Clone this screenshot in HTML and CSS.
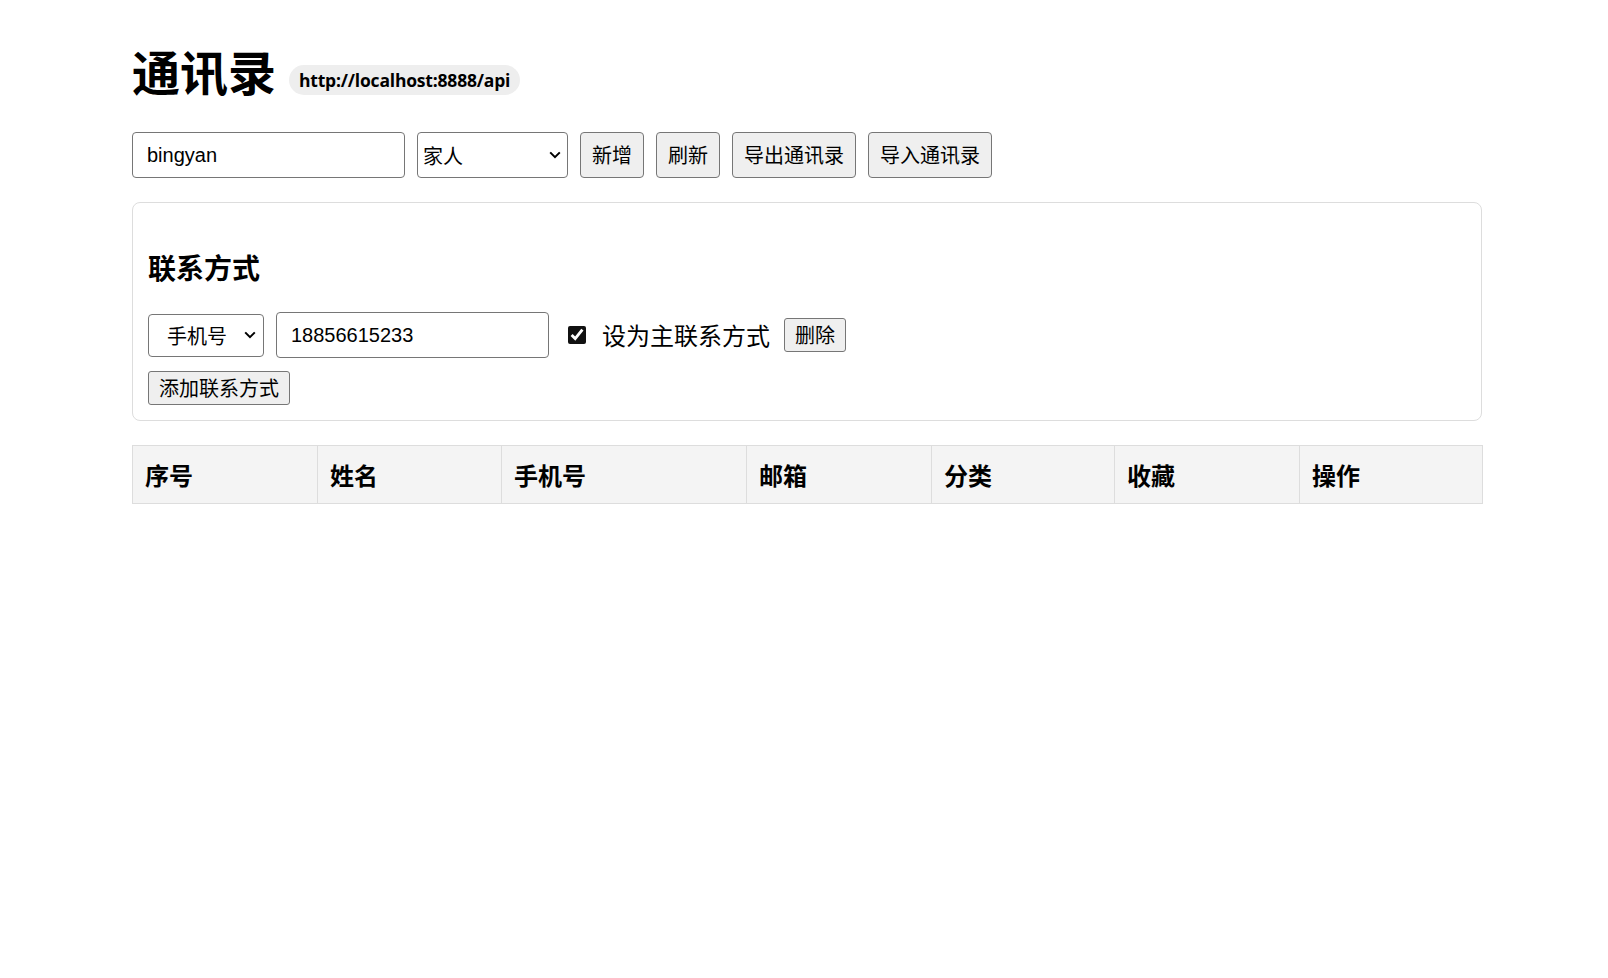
FILE: index.html
```html
<!DOCTYPE html>
<html lang="zh-CN">
<head>
<meta charset="utf-8">
<title>通讯录</title>
<link rel="stylesheet" href="styles.css">
</head>
<body>
<div class="page">
  <div class="title-row">
    <h1 class="title">通讯录</h1>
    <span class="badge">http://localhost:8888/api</span>
  </div>

  <div class="toolbar">
    <input class="name-input" type="text" value="bingyan">
    <select class="group-select">
      <option>家人</option>
      <option>朋友</option>
      <option>同事</option>
    </select>
    <button class="tool-btn">新增</button>
    <button class="tool-btn">刷新</button>
    <button class="tool-btn">导出通讯录</button>
    <button class="tool-btn">导入通讯录</button>
  </div>

  <section class="card">
    <h3 class="card-title">联系方式</h3>
    <div class="contact-row">
      <select class="type-select">
        <option>手机号</option>
        <option>邮箱</option>
      </select>
      <input class="value-input" type="text" value="18856615233">
      <input class="primary-check" type="checkbox" checked>
      <span class="primary-label">设为主联系方式</span>
      <button class="small-btn">删除</button>
    </div>
    <button class="small-btn add-btn">添加联系方式</button>
  </section>

  <table class="contacts">
    <colgroup>
      <col class="c-idx">
      <col class="c-name">
      <col class="c-phone">
      <col class="c-mail">
      <col class="c-cat">
      <col class="c-fav">
      <col class="c-op">
    </colgroup>
    <thead>
      <tr>
        <th>序号</th>
        <th>姓名</th>
        <th>手机号</th>
        <th>邮箱</th>
        <th>分类</th>
        <th>收藏</th>
        <th>操作</th>
      </tr>
    </thead>
    <tbody></tbody>
  </table>
</div>
</body>
</html>
```

FILE: styles.css
```css
html, body {
  margin: 0;
  padding: 0;
  background: #fff;
  color: #000;
}

body {
  font-family: "Liberation Sans", "Noto Sans CJK SC", sans-serif;
}

.page {
  width: 1350px;
  margin: 0 0 0 132px;
  padding-top: 38px;
}

.title-row {
  display: flex;
  align-items: center;
  height: 64px;
}

.title {
  margin: 0;
  font-family: "Noto Sans CJK SC", sans-serif;
  font-size: 48px;
  font-weight: 700;
  line-height: 64px;
}

.badge {
  margin-left: 13px;
  margin-top: 20px;
  height: 30px;
  line-height: 30px;
  padding: 0 10px;
  border-radius: 15px;
  background: #eeeeee;
  font-family: "Open Sans", "Noto Sans", sans-serif;
  font-size: 17.5px;
  font-weight: 700;
  letter-spacing: -0.2px;
}

.toolbar {
  display: flex;
  align-items: center;
  gap: 12px;
  margin-top: 30px;
}

.name-input,
.value-input {
  box-sizing: border-box;
  width: 273px;
  height: 46px;
  padding: 0 14px;
  border: 1px solid #767676;
  border-radius: 4px;
  font-family: "Liberation Sans", "Noto Sans CJK SC", sans-serif;
  font-size: 20px;
  color: #000;
  background: #fff;
  outline: none;
}

.group-select,
.type-select {
  box-sizing: border-box;
  appearance: none;
  -webkit-appearance: none;
  border: 1px solid #767676;
  border-radius: 4px;
  background-color: #fff;
  background-image: url("data:image/svg+xml,%3Csvg xmlns='http://www.w3.org/2000/svg' width='12' height='8' viewBox='0 0 12 8'%3E%3Cpath d='M1.2 1.4 L6 6.2 L10.8 1.4' fill='none' stroke='%23000' stroke-width='2'/%3E%3C/svg%3E");
  background-repeat: no-repeat;
  font-family: "Noto Sans CJK SC", sans-serif;
  font-size: 20px;
  color: #000;
  outline: none;
}

.group-select {
  width: 151px;
  height: 46px;
  padding: 0 0 0 5px;
  background-position: right 6px center;
}

.tool-btn,
.small-btn {
  box-sizing: border-box;
  border: 1px solid #767676;
  border-radius: 4px;
  background: #efefef;
  color: #000;
  font-family: "Noto Sans CJK SC", sans-serif;
  font-size: 20px;
  line-height: 1;
  cursor: pointer;
}

.tool-btn {
  height: 46px;
  padding: 0 11px;
}

.card {
  margin-top: 24px;
  border: 1px solid #dddddd;
  border-radius: 8px;
  padding: 44px 15px 15px;
}

.card-title {
  margin: 0;
  font-family: "Noto Sans CJK SC", sans-serif;
  font-size: 28px;
  font-weight: 700;
  line-height: 40px;
}

.contact-row {
  display: flex;
  align-items: center;
  margin-top: 25px;
}

.type-select {
  width: 116px;
  height: 43px;
  padding: 0 0 0 18px;
  background-position: right 7px center;
}

.value-input {
  margin-left: 12px;
}

.primary-check {
  width: 18px;
  height: 18px;
  margin: 0 0 0 19px;
  accent-color: #111;
}

.primary-label {
  margin-left: 16px;
  font-family: "Noto Sans CJK SC", sans-serif;
  font-size: 24px;
  line-height: 34px;
}

.small-btn {
  height: 34px;
  padding: 0 10px;
  border-radius: 3px;
}

.contact-row .small-btn {
  margin-left: 14px;
}

.add-btn {
  display: block;
  margin-top: 13px;
}

.contacts {
  margin-top: 24px;
  width: 1350px;
  border-collapse: collapse;
  table-layout: fixed;
}

.contacts th {
  height: 57px;
  padding: 0 12px;
  border: 1px solid #dddddd;
  background: #f4f4f4;
  text-align: left;
  font-family: "Noto Sans CJK SC", sans-serif;
  font-size: 24px;
  font-weight: 700;
  line-height: 1;
}

.c-idx { width: 185px; }
.c-name { width: 184px; }
.c-phone { width: 245px; }
.c-mail { width: 185px; }
.c-cat { width: 183px; }
.c-fav { width: 185px; }
.c-op { width: 183px; }
```
